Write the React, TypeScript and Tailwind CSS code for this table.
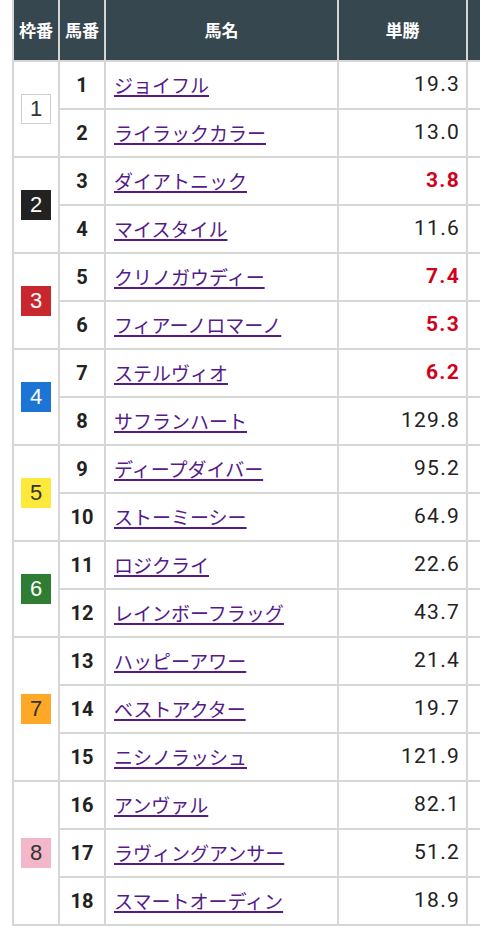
const frameColors: Record<number, string> = {
  1: 'bg-white text-[#333] border border-[#cfcfcf]',
  2: 'bg-[#222222] text-white',
  3: 'bg-[#c8282d] text-white',
  4: 'bg-[#1c74d4] text-white',
  5: 'bg-[#fde93b] text-[#333]',
  6: 'bg-[#2e7d32] text-white',
  7: 'bg-[#ffa726] text-[#333]',
  8: 'bg-[#f4b6c9] text-[#333]'
};

interface Horse {
  frame: number;
  no: number;
  name: string;
  odds: string;
  fav?: boolean;
}

const horses: Horse[] = [
  { frame: 1, no: 1, name: 'ジョイフル', odds: '19.3' },
  { frame: 1, no: 2, name: 'ライラックカラー', odds: '13.0' },
  { frame: 2, no: 3, name: 'ダイアトニック', odds: '3.8', fav: true },
  { frame: 2, no: 4, name: 'マイスタイル', odds: '11.6' },
  { frame: 3, no: 5, name: 'クリノガウディー', odds: '7.4', fav: true },
  { frame: 3, no: 6, name: 'フィアーノロマーノ', odds: '5.3', fav: true },
  { frame: 4, no: 7, name: 'ステルヴィオ', odds: '6.2', fav: true },
  { frame: 4, no: 8, name: 'サフランハート', odds: '129.8' },
  { frame: 5, no: 9, name: 'ディープダイバー', odds: '95.2' },
  { frame: 5, no: 10, name: 'ストーミーシー', odds: '64.9' },
  { frame: 6, no: 11, name: 'ロジクライ', odds: '22.6' },
  { frame: 6, no: 12, name: 'レインボーフラッグ', odds: '43.7' },
  { frame: 7, no: 13, name: 'ハッピーアワー', odds: '21.4' },
  { frame: 7, no: 14, name: 'ベストアクター', odds: '19.7' },
  { frame: 7, no: 15, name: 'ニシノラッシュ', odds: '121.9' },
  { frame: 8, no: 16, name: 'アンヴァル', odds: '82.1' },
  { frame: 8, no: 17, name: 'ラヴィングアンサー', odds: '51.2' },
  { frame: 8, no: 18, name: 'スマートオーディン', odds: '18.9' }
];

const cell = 'border-2 border-[#d6d6d6]';
const head = 'border-2 border-t-0 border-[#d6d6d6] bg-[#37474f] text-white font-bold text-[17px]';

export default function App() {
  return (
    <div className="w-[480px] h-[934px] overflow-hidden bg-white pl-[12px] font-['Noto_Sans_CJK_JP',sans-serif]">
      <table className="w-[514px] table-fixed border-collapse">
        <colgroup>
          <col className="w-[46px]" />
          <col className="w-[46px]" />
          <col className="w-[233px]" />
          <col className="w-[129px]" />
          <col className="w-[60px]" />
        </colgroup>
        <thead>
          <tr className="h-[61px]">
            <th className={head}>枠番</th>
            <th className={head}>馬番</th>
            <th className={head}>馬名</th>
            <th className={head}>単勝</th>
            <th className={head}></th>
          </tr>
        </thead>
        <tbody>
          {horses.map((h, i) => {
            const first = i === 0 || horses[i - 1].frame !== h.frame;
            const span = horses.filter((x) => x.frame === h.frame).length;
            return (
              <tr key={h.no} className="h-[48px]">
                {first && (
                  <td className={cell} rowSpan={span}>
                    <div
                      className={`mx-auto flex h-[30px] w-[30px] items-center justify-center font-['Liberation_Sans',sans-serif] text-[22px] leading-none ${frameColors[h.frame]}`}
                    >
                      {h.frame}
                    </div>
                  </td>
                )}
                <td className={`${cell} text-center font-['Roboto',sans-serif] text-[20px] font-bold text-[#222]`}>{h.no}</td>
                <td className={`${cell} pl-[8px] text-[19px]`}>
                  <a href="#" className="whitespace-nowrap text-[#551a8b] underline decoration-[1.5px] underline-offset-[2px]">
                    {h.name}
                  </a>
                </td>
                <td
                  className={`${cell} pr-[6px] text-right font-['Roboto',sans-serif] text-[21px] tracking-[0.06em] ${
                    h.fav ? 'font-bold text-[#d0021b]' : 'text-[#222]'
                  }`}
                >
                  {h.odds}
                </td>
                <td className={cell}></td>
              </tr>
            );
          })}
        </tbody>
      </table>
    </div>
  );
}
